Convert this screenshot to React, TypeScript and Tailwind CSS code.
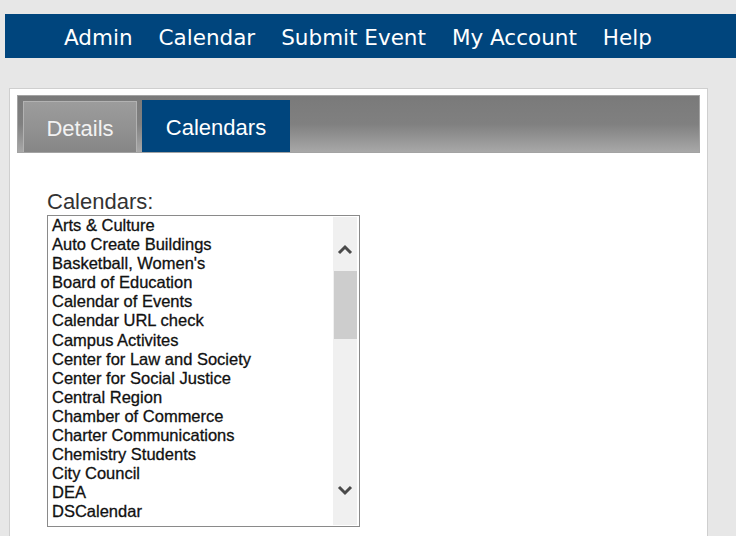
const calendars = [
  'Arts & Culture',
  'Auto Create Buildings',
  "Basketball, Women's",
  'Board of Education',
  'Calendar of Events',
  'Calendar URL check',
  'Campus Activites',
  'Center for Law and Society',
  'Center for Social Justice',
  'Central Region',
  'Chamber of Commerce',
  'Charter Communications',
  'Chemistry Students',
  'City Council',
  'DEA',
  'DSCalendar',
]

const navItems = ['Admin', 'Calendar', 'Submit Event', 'My Account', 'Help']

export default function App() {
  return (
    <div className="h-[536px] overflow-hidden bg-[#e7e7e7] pt-[14px]">
      {/* Top nav */}
      <div className="ml-[5px] flex h-[44px] items-center gap-[26px] bg-[#00457d] pl-[59px] pt-[5px] text-[21.5px] text-white [font-family:'DejaVu_Sans',sans-serif]">
        {navItems.map(n => (
          <span key={n}>{n}</span>
        ))}
      </div>

      {/* Panel */}
      <div className="ml-[9px] mt-[30px] h-[460px] w-[699px] border border-[#cfcfcf] bg-white px-[7px] pt-[6px] [font-family:'Liberation_Sans',Arial,sans-serif]">
        {/* Tab bar */}
        <div className="flex h-[58px] items-end gap-[5px] border border-[#a3a3a3] bg-gradient-to-b from-[#7a7a7a] via-[#808080] to-[#a8a8a8] pl-[5px]">
          <div className="flex h-[51px] w-[114px] items-center justify-center border border-b-0 border-[#b2b2b2] bg-gradient-to-b from-[#9c9c9c] via-[#929292] to-[#868686] pt-[2px] text-[22px] text-[#f2f2f2]">
            Details
          </div>
          <div className="flex h-[52px] w-[148px] items-center justify-center bg-[#00457d] pt-[2px] text-[22px] text-white">
            Calendars
          </div>
        </div>

        {/* Content */}
        <div className="pl-[30px] pt-[36px]">
          <div className="text-[22px] leading-[26px] text-[#333]">Calendars:</div>
          <div className="flex h-[312px] w-[313px] border border-[#8a8a8a] bg-white">
            <div className="flex-1 overflow-hidden pl-[4px]">
              {calendars.map(c => (
                <div key={c} className="text-[16.5px] leading-[19.1px] whitespace-nowrap text-[#111] [-webkit-text-stroke:0.3px_#111]">
                  {c}
                </div>
              ))}
            </div>
            <div className="relative my-[1px] mr-[2px] w-[24px] bg-[#f0f0f0]">
              <svg className="absolute left-[4px] top-[27px]" width="16" height="11" viewBox="0 0 16 11">
                <path d="M2 9 L8 3 L14 9" fill="none" stroke="#4a4a4a" strokeWidth="3" />
              </svg>
              <div className="absolute left-[1px] right-0 top-[54px] h-[68px] bg-[#cdcdcd]" />
              <svg className="absolute left-[4px] top-[268px]" width="16" height="11" viewBox="0 0 16 11">
                <path d="M2 2 L8 8 L14 2" fill="none" stroke="#4a4a4a" strokeWidth="3" />
              </svg>
            </div>
          </div>
        </div>
      </div>
    </div>
  )
}
